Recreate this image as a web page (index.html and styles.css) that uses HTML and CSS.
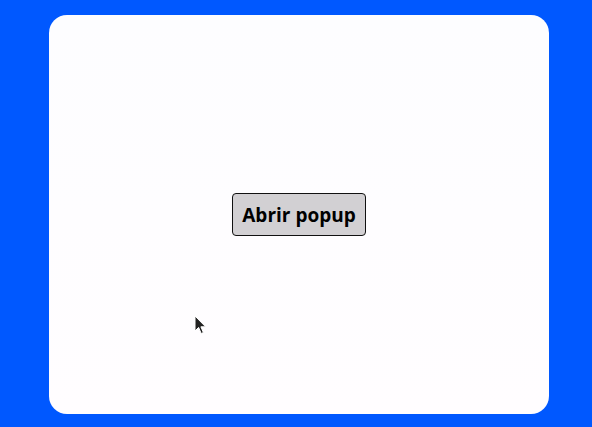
FILE: index.html
```html
<!DOCTYPE html>
<html lang="es">
<head>
<meta charset="utf-8">
<title>Popup</title>
<link rel="stylesheet" href="styles.css">
</head>
<body>
<main class="card">
  <button class="open-btn" type="button">Abrir popup</button>
</main>
<svg class="cursor" width="13" height="20" viewBox="0 0 13 20" aria-hidden="true">
  <path d="M1 1 L1 16 L4.6 12.4 L7.2 18.5 L9.4 17.5 L6.9 11.8 L11.6 11.8 Z" fill="#222" stroke="#fff" stroke-width="1"/>
</svg>
</body>
</html>
```

FILE: styles.css
```css
html, body {
  margin: 0;
  height: 100%;
}
body {
  background: #0058ff;
  box-sizing: border-box;
  padding: 15px 43px 13px 49px;
  display: flex;
  font-family: "Open Sans", "Noto Sans", sans-serif;
}
.card {
  flex: 1;
  background: linear-gradient(180deg, #fdfdff 0%, #fffdff 100%);
  border-radius: 18px;
  display: flex;
  align-items: center;
  justify-content: center;
}
.open-btn {
  width: 134px;
  height: 43px;
  background: #d2d0d3;
  border: 1px solid #111;
  border-radius: 4px;
  font-family: "Open Sans", "Noto Sans", sans-serif;
  font-weight: 700;
  font-size: 19px;
  color: #000;
  padding: 0;
}
.cursor {
  position: absolute;
  left: 194px;
  top: 315px;
}
```
